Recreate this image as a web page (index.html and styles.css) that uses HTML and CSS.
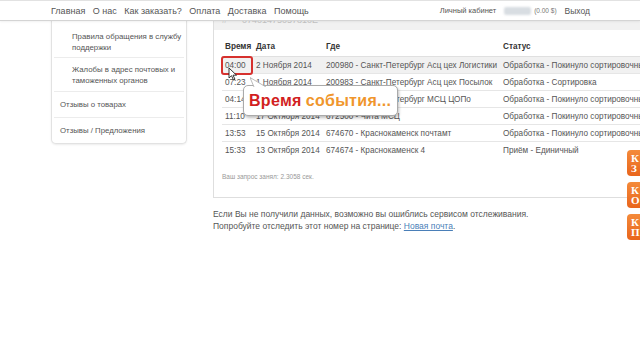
FILE: index.html
```html
<!DOCTYPE html>
<html lang="ru">
<head>
<meta charset="utf-8">
<link rel="stylesheet" href="styles.css">
</head>
<body>
<header class="topbar">
  <nav class="menu">
    <a>Главная</a><a>О нас</a><a>Как заказать?</a><a>Оплата</a><a>Доставка</a><a>Помощь</a>
  </nav>
  <div class="account">
    <a>Личный кабинет</a>
    <span class="blur"></span>
    <span class="balance">(0.00 $)</span>
    <a>Выход</a>
  </div>
</header>
<div class="page">
  <aside class="side">
    <div class="item sub">Правила обращения в службу<br>поддержки</div>
    <div class="item sub">Жалобы в адрес почтовых и<br>таможенных органов</div>
    <div class="item main">Отзывы о товарах</div>
    <div class="item main">Отзывы / Предложения</div>
  </aside>
  <section class="content">
    <div class="panel">
      <div class="panel-head"><span>#	07401475057810Е</span></div>
      <div class="table">
        <div class="row head"><span>Время</span><span>Дата</span><span>Где</span><span>Статус</span></div>
        <div class="row hover"><span>04:00</span><span>2 Ноября 2014</span><span>200980 - Санкт-Петербург Асц цех Логистики</span><span>Обработка - Покинуло сортировочный центр</span></div>
        <div class="row"><span>07:23</span><span>1 Ноября 2014</span><span>200983 - Санкт-Петербург Асц цех Посылок</span><span>Обработка - Сортировка</span></div>
        <div class="row"><span>04:14</span><span>31 Октября 2014</span><span>200960 - Санкт-Петербург МСЦ ЦОПо</span><span>Обработка - Покинуло сортировочный центр</span></div>
        <div class="row"><span>11:10</span><span>17 Октября 2014</span><span>672500 - Чита МСЦ</span><span>Обработка - Покинуло сортировочный центр</span></div>
        <div class="row"><span>13:53</span><span>15 Октября 2014</span><span>674670 - Краснокаменск почтамт</span><span>Обработка - Покинуло сортировочный центр</span></div>
        <div class="row last"><span>15:33</span><span>13 Октября 2014</span><span>674674 - Краснокаменск 4</span><span>Приём - Единичный</span></div>
      </div>
      <p class="took">Ваш запрос занял: 2.3058 сек.</p>
    </div>
    <p class="note">Если Вы не получили данных, возможно вы ошиблись сервисом отслеживания.<br>Попробуйте отследить этот номер на странице: <a class="link">Новая почта</a>.</p>
  </section>
</div>

<div class="mark"></div>
<svg class="cursor" width="10" height="14" viewBox="0 0 10 14"><path d="M1 1 L1 11 L3.5 8.7 L5.5 13 L7 12.3 L5 8.2 L8.5 8.2 Z" fill="#fff" stroke="#222" stroke-width="0.9" stroke-linejoin="round"/></svg>
<div class="tip">
  <svg class="tail" width="20" height="10" viewBox="0 0 20 10"><path d="M4 10 L0 0.5 L16 10" fill="#fff" stroke="#aaa" stroke-width="0.8"/></svg>
  <span class="red">Время</span> <span class="orange">события...</span>
</div>

<div class="btns">
  <div class="obtn">К<br>З</div>
  <div class="obtn">К<br>О</div>
  <div class="obtn">К<br>П</div>
</div>
</body>
</html>
```
FILE: styles.css
```css
* { box-sizing: border-box; }
html, body { margin: 0; padding: 0; }
body {
  width: 640px; height: 360px; overflow: hidden;
  background: #fff;
  font-family: "Liberation Sans", Arial, sans-serif;
  color: #555;
  position: relative;
}
a { color: inherit; text-decoration: none; }

.topbar {
  height: 21px;
  border-top: 1px solid #e2e2e2;
  border-bottom: 1px solid #d4d4d4;
  display: flex; align-items: center;
  font-size: 9px; color: #555;
  padding-left: 51px;
  white-space: nowrap;
  box-shadow: 0 1px 2px rgba(0,0,0,0.06);
  position: relative; z-index: 2;
  background: #fff;
}
.menu { display: flex; gap: 7.5px; flex-shrink: 0; }
.account { display: flex; align-items: center; margin-left: auto; margin-right: 50px; flex-shrink: 0; font-size: 7.5px; }
.account .blur { width: 27px; height: 8px; background: #d8dde2; margin: 0 3px 0 8px; border-radius: 2px; filter: blur(1px); }
.account .balance { font-size: 6.5px; color: #777; margin-right: 8px; }
.account a:last-child { font-size: 8.5px; }

.page { display: flex; align-items: flex-start; }

.side {
  flex: 0 0 136px;
  margin-left: 51px;
  margin-top: -2px;
  border: 1px solid #e2e2e2; border-top: none;
  border-radius: 0 0 5px 5px;
  box-shadow: 0 1px 2px rgba(0,0,0,0.08);
  background: #fff;
  padding: 0 2px;
  font-size: 7.8px; line-height: 11px; color: #555;
  white-space: nowrap;
}
.item { border-bottom: 1px solid #ececec; overflow: hidden; }
.item:last-child { border-bottom: none; }
.item.sub { padding: 6px 0 5px 18px; }
.item.sub:first-child { padding-top: 12px; padding-bottom: 4px; }
.item.main { padding: 7px 6px; }

.content { margin-left: 26px; flex: 1 1 auto; min-width: 0; }
.panel {
  margin-top: -1px;
  border: 1px solid #dedede; border-right: none; border-top: none;
  height: 178px;
  background: #fff;
  overflow: hidden;
}
.panel-head {
  height: 10px; background: #f1f1f1; overflow: hidden;
  padding-left: 8px;
  font-size: 9px; line-height: 9px; color: #c4c4c4;
}
.panel-head span { display: block; margin-top: -4px; white-space: pre; }

.table { margin: 9px 0 0 8px; font-size: 8.2px; }
.row {
  display: grid;
  grid-template-columns: 31px 70px 177px 200px;
  height: 17px; align-items: center;
  border-bottom: 1px solid #e6e6e6;
  white-space: nowrap; overflow: hidden;
}
.row span { padding-left: 3px; overflow: hidden; }
.row.head { height: 18px; padding-bottom: 3px; font-weight: bold; color: #333; border-bottom: 1px solid #e0e0e0; }
.row.hover { background: #f1f1f1; }
.row.last { border-bottom: none; }

.took { margin: 14px 0 0 8px; font-size: 6.5px; color: #999; }

.note { margin: 10px 0 0 0; font-size: 8.5px; line-height: 12px; color: #555; white-space: nowrap; }
.link { color: #4a7fb8; text-decoration: underline; }

.mark {
  position: absolute; left: 221px; top: 56px; width: 32px; height: 19px;
  border: 2px solid #d6312e; border-radius: 3px;
}
.cursor { position: absolute; left: 228px; top: 67px; }

.tip {
  position: absolute; left: 243px; top: 85px; width: 155px; height: 31px;
  background: #fff; border: 1px solid #aaa; border-radius: 5px;
  box-shadow: 1px 2px 3px rgba(0,0,0,0.25);
  font-family: "Liberation Sans", Arial, sans-serif;
  font-weight: bold; font-size: 16px; letter-spacing: 0.3px;
  display: flex; align-items: center; gap: 4px; padding-left: 5px;
  white-space: nowrap;
}
.tip .tail { position: absolute; left: 6px; top: -9px; }
.red { color: #d21f1f; }
.orange { color: #f0962c; }

.btns {
  position: absolute; left: 627px; top: 150px;
  display: flex; flex-direction: column; gap: 6px;
}
.obtn {
  width: 20px; height: 26px; border-radius: 4px;
  background: linear-gradient(#f48a3a, #e9651c);
  color: #fff; font-family: "Liberation Serif", serif; font-weight: bold;
  font-size: 11px; line-height: 10px; padding: 3px 0 0 4px;
}
```
